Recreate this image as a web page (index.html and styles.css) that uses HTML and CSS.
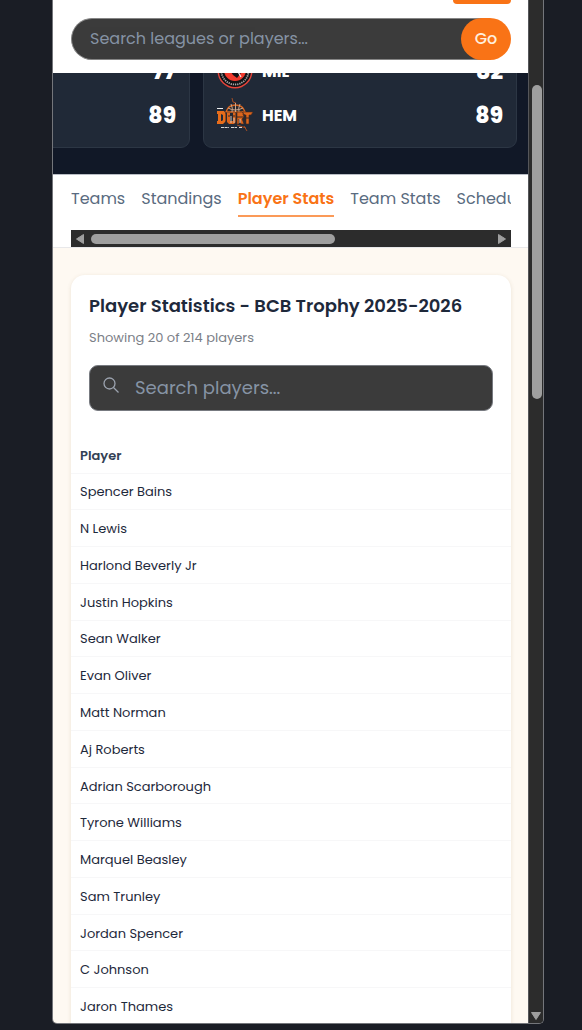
FILE: index.html
```html
<!DOCTYPE html>
<html lang="en">
<head>
<meta charset="utf-8">
<meta name="viewport" content="width=device-width, initial-scale=1">
<title>Player Statistics - BCB Trophy 2025-2026</title>
<link rel="stylesheet" href="styles.css">
</head>
<body>
<div class="device">
  <div class="page">
    <header class="topbar">
      <button class="menu-button" type="button" aria-label="Menu"></button>
      <form class="site-search">
        <input class="site-search-input" type="text" aria-label="Search leagues or players" placeholder="Search leagues or players...">
        <button class="go-button" type="button">Go</button>
      </form>
    </header>

    <section class="scores" aria-label="Scores">
      <article class="game">
        <div class="team"><span class="score">77</span></div>
        <div class="team"><span class="score">89</span></div>
      </article>
      <article class="game">
        <div class="team">
          <svg class="logo" viewBox="0 0 36 36" aria-hidden="true">
            <circle cx="18" cy="18" r="17.500" fill="#e5443a"/>
            <circle cx="18" cy="18" r="16" fill="#111216"/>
            <circle cx="18" cy="18" r="13.500" fill="none" stroke="#a8a8a8" stroke-width="1.800" stroke-dasharray="1.300 .9"/>
            <circle cx="18" cy="17" r="11" fill="#f03a2d"/>
            <path d="M9 12l7 10 4 3 4-5 1-6-3-7-9 1z" fill="#111216"/>
            <path d="M20 17l4 7" stroke="#eee" stroke-width="1.200"/>
          </svg>
          <span class="code">MIL</span>
          <span class="score">82</span>
        </div>
        <div class="team">
          <svg class="logo" viewBox="0 0 36 36" aria-hidden="true">
            <path d="M15 1l1 4 3 1M27 29l3 5M20 28l9 3" fill="none" stroke="#a34e25" stroke-width="1"/>
            <path d="M9 15a10 10 0 0 1 19 0z" fill="#2a2a2e" stroke="#d9651f" stroke-width="1.500"/>
            <path d="M11 11q7 4 15 0M18.500 6v9M14 7q2 4 1 8M23 7q-2 4-1 8" fill="none" stroke="#c9a58c" stroke-width="1"/>
            <path d="M0 11.500h6" stroke="#eee" stroke-width="1"/>
            <path d="M0 14h7l2 3v7l-3 3H0v-3h1v-7H0zM4 17v7h1l1-1v-5z" fill="#e76d1b" fill-rule="evenodd"/>
            <path d="M10 16h3v8h3v-8h3v9l-2 2h-5l-2-2z" fill="#dc651c"/>
            <path d="M20 15h5l2 2v3l-2 2 2 5h-3l-2-5v5h-2zM26 15h10l-2 3h-2v9h-3v-9h-3z" fill="#dc651c" stroke="#4c2a1c" stroke-width=".6"/>
            <path d="M11 19h7M20 20h6M29 21h3M9 15v12M19 15v12M27 17v9" stroke="#3b2822" stroke-width="1"/>
            <path d="M14 19v7M17 21v5M23 22v4" stroke="#cfc7c2" stroke-width="1"/>
            <path d="M4 30.500h8M14 30.500h6M22 30.500h3" stroke="#d7d7d7" stroke-width="1" stroke-dasharray="3 .6"/>
          </svg>
          <span class="code">HEM</span>
          <span class="score">89</span>
        </div>
      </article>
    </section>

    <div class="tabs">
      <nav class="tab-list" aria-label="League sections">
        <a class="tab" href="#teams">Teams</a>
        <a class="tab" href="#standings">Standings</a>
        <a class="tab tab-active" href="#player-stats" aria-current="page">Player Stats</a>
        <a class="tab" href="#team-stats">Team Stats</a>
        <a class="tab" href="#schedule">Schedule</a>
      </nav>
      <div class="hscroll" aria-hidden="true">
        <svg class="arrow" viewBox="0 0 10 12"><path d="M8.500 1.500v9L1.500 6z" fill="#9f9f9f" stroke="#9f9f9f" stroke-linejoin="round"/></svg>
        <div class="htrack"><div class="hthumb"></div></div>
        <svg class="arrow" viewBox="0 0 10 12"><path d="M1.500 1.500v9L8.500 6z" fill="#9f9f9f" stroke="#9f9f9f" stroke-linejoin="round"/></svg>
      </div>
    </div>

    <main class="content">
      <section class="panel" id="player-stats">
        <div class="panel-head">
          <h1 class="title">Player Statistics - BCB Trophy 2025-2026</h1>
          <p class="summary">Showing 20 of 214 players</p>
          <div class="player-search">
            <svg class="search-icon" viewBox="0 0 16 16" aria-hidden="true"><circle cx="6.500" cy="6.500" r="5.500"/><path d="M10.500 10.500l5 5"/></svg>
            <input class="player-input" type="text" aria-label="Search players" placeholder="Search players...">
          </div>
        </div>
        <table class="players">
          <thead><tr><th scope="col">Player</th></tr></thead>
          <tbody>
            <tr><td>Spencer Bains</td></tr>
            <tr><td>N Lewis</td></tr>
            <tr><td>Harlond Beverly Jr</td></tr>
            <tr><td>Justin Hopkins</td></tr>
            <tr><td>Sean Walker</td></tr>
            <tr><td>Evan Oliver</td></tr>
            <tr><td>Matt Norman</td></tr>
            <tr><td>Aj Roberts</td></tr>
            <tr><td>Adrian Scarborough</td></tr>
            <tr><td>Tyrone Williams</td></tr>
            <tr><td>Marquel Beasley</td></tr>
            <tr><td>Sam Trunley</td></tr>
            <tr><td>Jordan Spencer</td></tr>
            <tr><td>C Johnson</td></tr>
            <tr><td>Jaron Thames</td></tr>
          </tbody>
        </table>
      </section>
    </main>
  </div>
  <div class="vscroll" aria-hidden="true">
    <div class="vthumb"></div>
    <svg class="arrow-down" viewBox="0 0 12 10"><path d="M1.500 1.500h9L6 8.500z" fill="#9f9f9f" stroke="#9f9f9f" stroke-linejoin="round"/></svg>
  </div>
</div>
</body>
</html>
```

FILE: styles.css
```css
* {
  box-sizing: border-box;
}

body {
  margin: 0;
  height: 100vh;
  padding: 0 38px 6px 52px;
  overflow: hidden;
  background: #1a1d25;
  font-family: Poppins, Inter, "Open Sans", sans-serif;
  color: #1e293b;
}

input,
button {
  font: inherit;
}

.device {
  display: flex;
  height: 100%;
  overflow: hidden;
  border: 1px solid #74767b;
  border-top: 0;
  border-radius: 0 0 5px 5px;
  background: #2c2c2c;
}

.page {
  flex: 1;
  min-width: 0;
  overflow: hidden;
  background: #fef9f2;
}

.topbar {
  display: flex;
  flex-direction: column;
  padding: 0 17px 13px 18px;
  background: #fff;
}

.menu-button {
  align-self: flex-end;
  width: 58px;
  height: 4px;
  margin-bottom: 14px;
  padding: 0;
  border: 0;
  border-radius: 0 0 8px 8px;
  background: #f97316;
}

.site-search {
  display: flex;
  height: 42px;
}

.site-search-input {
  flex: 1;
  min-width: 0;
  margin-right: -21px;
  padding: 0 18px 2px;
  border: 1px solid #858585;
  border-right: 0;
  border-radius: 21px 0 0 21px;
  background: #3b3b3b;
  font-size: 16px;
  color: #fff;
}

.site-search-input::placeholder,
.player-input::placeholder {
  color: #94a3b8;
  opacity: 0.85;
}

.go-button {
  position: relative;
  width: 50px;
  padding: 0 0 2px;
  border: 0;
  border-radius: 21px;
  background: #f97316;
  font-size: 16px;
  font-weight: 500;
  color: #ffeedd;
}

.scores {
  display: flex;
  align-items: flex-end;
  justify-content: flex-end;
  gap: 13px;
  height: 101px;
  padding: 0 11px 26px;
  overflow: hidden;
  background: #111827;
}

.game {
  display: flex;
  flex: none;
  flex-direction: column;
  gap: 8px;
  width: 314px;
  padding: 13px 13px 14px;
  border: 1px solid #2c3644;
  border-radius: 9px;
  background: #202937;
}

.team {
  display: flex;
  align-items: center;
  gap: 9px;
  height: 36px;
}

.logo {
  width: 36px;
  height: 36px;
}

.code {
  font-size: 16px;
  font-weight: 700;
  color: #fff;
}

.score {
  margin-left: auto;
  font-size: 22px;
  font-weight: 800;
  color: #fff;
}

.tabs {
  padding: 12px 17px 0 18px;
  border-top: 1px solid #b9bdc5;
  border-bottom: 1px solid #e8e8ea;
  background: #fff;
}

.tab-list {
  display: flex;
  gap: 16px;
  overflow: hidden;
  padding-bottom: 13px;
}

.tab {
  flex: none;
  padding-bottom: 4px;
  border-bottom: 2px solid transparent;
  font-size: 16px;
  line-height: 24px;
  color: #596b80;
  text-decoration: none;
}

.tab-active {
  border-color: #fb9a58;
  font-weight: 600;
  color: #f97316;
}

.hscroll {
  display: flex;
  align-items: center;
  gap: 6px;
  height: 17px;
  padding: 0 4px;
  background: #2c2c2c;
}

.arrow {
  width: 10px;
  height: 12px;
}

.htrack {
  flex: 1;
}

.hthumb {
  width: 61%;
  height: 10px;
  border-radius: 5px;
  background: #9f9f9f;
}

.content {
  padding: 27px 17px 0 18px;
}

.panel {
  overflow: hidden;
  padding-bottom: 24px;
  border-radius: 14px;
  background: #fff;
  box-shadow: 0 1px 4px rgba(120, 90, 50, 0.14);
}

.panel-head {
  padding: 18px 18px 26px;
}

.title {
  margin: 0;
  font-size: 18px;
  font-weight: 600;
  line-height: 26px;
  white-space: nowrap;
}

.summary {
  margin: 8px 0 16px;
  font-size: 13px;
  line-height: 22px;
  color: #7b8087;
}

.player-search {
  display: flex;
  align-items: center;
  gap: 16px;
  height: 46px;
  padding: 0 13px 2px;
  border: 1px solid #777a80;
  border-radius: 9px;
  background: #3b3b3b;
}

.search-icon {
  width: 16px;
  height: 16px;
  margin-bottom: 4px;
  fill: none;
  stroke: #9ca3af;
  stroke-width: 1.3;
}

.player-input {
  flex: 1;
  min-width: 0;
  padding: 0;
  border: 0;
  background: transparent;
  font-size: 18px;
  color: #fff;
}

.players {
  width: 100%;
  height: 588px;
  border-collapse: collapse;
  font-size: 13px;
}

.players th,
.players td {
  height: 36px;
  padding: 2px 9px 0;
  border-bottom: 1px solid #f7f7f8;
  text-align: left;
}

.players th {
  font-weight: 600;
  color: #334155;
}

.vscroll {
  display: flex;
  flex: none;
  flex-direction: column;
  align-items: flex-end;
  justify-content: space-between;
  width: 15px;
  padding: 85px 1px 2px 0;
  border-left: 1px solid #55565a;
  background: #2c2c2c;
}

.vthumb {
  width: 10px;
  height: 314px;
  border-radius: 5px;
  background: #9f9f9f;
}

.arrow-down {
  width: 12px;
  height: 10px;
}
```
